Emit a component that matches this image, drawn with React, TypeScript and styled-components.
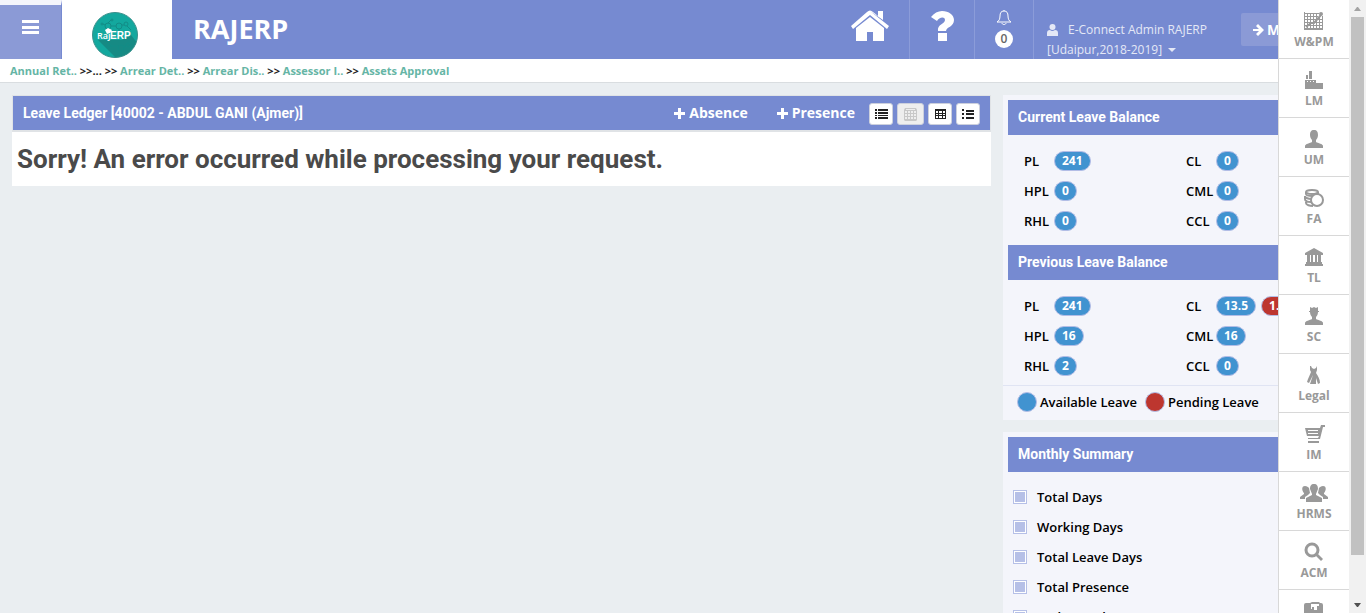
import React from "react";
import styled, { createGlobalStyle, css } from "styled-components";

const Global = createGlobalStyle`
  *, *::before { box-sizing: border-box; }
  html, body { margin: 0; height: 100%; overflow: hidden; }
  body { background: #eaeef1; font: 13px/20px "Open Sans", sans-serif; color: #000; }
  button { font: inherit; border: 0; padding: 0; cursor: pointer; }
  a { text-decoration: none; }
  h1, h2, p, ul, dl, dd { margin: 0; padding: 0; }
  svg { display: block; fill: currentColor; }
`;

const Window = styled.div`
  display: grid;
  grid-template-columns: minmax(0, 1fr) 17px;
  height: 100vh;
`;
const Page = styled.div`
  position: relative;
  overflow: hidden;
`;

/* Header */
const Header = styled.header`
  display: flex;
  height: 59px;
  background: #768ad1;
  color: #fff;
`;
const MenuButton = styled.button`
  width: 62px;
  padding: 0 0 11px;
  display: flex;
  align-items: center;
  justify-content: center;
  background: #8b9ad6;
  color: #fff;
  border-top: 5px solid #f4f5fb;
  border-right: 1px solid #768ad1;
`;
const LogoLink = styled.a`
  width: 110px;
  padding: 12px 0 0 30px;
  background: #fff;
`;
const Brand = styled.h1`
  margin-left: 21px;
  font-size: 27px;
  line-height: 58px;
  font-weight: 700;
`;
const Actions = styled.nav`
  margin-left: auto;
  display: flex;
`;
const Action = styled.a<{ $w: number }>`
  width: ${(p) => p.$w}px;
  padding-top: 10px;
  display: flex;
  flex-direction: column;
  align-items: center;
  color: #fff;
  border-right: 1px solid #8b9cd9;
`;
const Count = styled.span`
  width: 18px;
  height: 18px;
  margin-top: 4px;
  border-radius: 9px;
  background: #fff;
  color: #666;
  font-size: 12px;
  line-height: 18px;
  font-weight: 600;
  text-align: center;
`;
const User = styled.button`
  width: 207px;
  padding: 20px 0 0 13px;
  background: none;
  color: #e4e8f6;
  text-align: left;
  display: flex;
  flex-direction: column;
  font-size: 12px;
`;
const UserLine = styled.span<{ $gap: number }>`
  display: flex;
  align-items: center;
  gap: ${(p) => p.$gap}px;
`;
const Caret = styled.i`
  border: 4px solid transparent;
  border-top-color: currentColor;
  border-bottom: 0;
`;
const ModuleButton = styled.button`
  width: 93px;
  height: 33px;
  margin: 13px 15px 0 0;
  padding-left: 12px;
  display: flex;
  align-items: center;
  gap: 3px;
  border-radius: 2px;
  background: #8b9ad6;
  color: #fff;
  font-size: 14px;
  font-weight: 700;
`;

/* Breadcrumb */
const Crumbs = styled.nav`
  height: 24px;
  padding-left: 10px;
  background: #fff;
  border-bottom: 1px solid #d9dde0;
  font-size: 11px;
  line-height: 24px;
  font-weight: 700;
  color: #222;
  white-space: pre;
  a { color: #65b5a5; }
`;

/* Content */
const Content = styled.main`
  display: grid;
  grid-template-columns: minmax(0, 1fr) 334px;
  gap: 12px;
  padding: 12px;
  align-items: start;
`;
const Ledger = styled.section`
  background: #fff;
`;
const LedgerHead = styled.div`
  height: 37px;
  padding: 0 10px;
  display: flex;
  align-items: center;
  border: 1px solid #e0e3e6;
  border-bottom-width: 2px;
  background: #768ad1;
  color: #fff;
  font: 700 14px/34px Roboto, sans-serif;
`;
const Tools = styled.div`
  margin-left: auto;
  display: flex;
  align-items: center;
`;
const AddButton = styled.button`
  display: flex;
  align-items: center;
  gap: 4px;
  margin-right: 29px;
  background: none;
  color: #fff;
  font: 700 14px/20px "Open Sans", sans-serif;
  & + & { margin-right: 14px; }
`;
const Views = styled.div`
  display: flex;
  gap: 4px;
  padding-top: 2px;
`;
const ViewButton = styled.button`
  width: 24px;
  height: 22px;
  display: flex;
  align-items: center;
  justify-content: center;
  border: 1px solid #ccd0dd;
  border-radius: 3px;
  background: #fff;
  color: #222;
  &:disabled { width: 27px; background: #eee; color: #c8c8c8; cursor: default; }
`;
const ErrorText = styled.h2`
  padding: 0 5px;
  font: 700 26px/54px Roboto, sans-serif;
  color: #4a4a4a;
`;

const Side = styled.aside`
  display: grid;
  gap: 12px;
`;
const Panel = styled.section`
  padding: 5px 0 0;
  background: #f4f5fb;
`;
const PanelHead = styled.h2`
  margin: 0 5px;
  padding-left: 10px;
  background: #768ad1;
  color: #fff;
  font: 700 14px/35px Roboto, sans-serif;
`;
const Balances = styled.dl<{ $last?: boolean }>`
  display: grid;
  grid-template-columns: 162px 1fr;
  padding: 11px 0 ${(p) => (p.$last ? 4 : 9)}px 21px;
`;
const Balance = styled.div`
  height: 30px;
  display: flex;
  align-items: center;
  gap: 5px;
  font-weight: 600;
  dt { width: 25px; }
  dd { display: flex; gap: 5px; }
`;
const pill = css<{ $pending?: boolean }>`
  border: 1px solid #b3bde6;
  border-radius: 10px;
  background: ${(p) => (p.$pending ? "#bd362f" : "#4193d0")};
`;
const Pill = styled.span<{ $pending?: boolean }>`
  ${pill}
  height: 20px;
  padding: 0 7px;
  color: #fff;
  font-size: 12px;
  line-height: 18px;
  font-weight: 700;
`;
const Legend = styled.p`
  height: 35px;
  padding: 0 0 3px 14px;
  display: flex;
  align-items: center;
  gap: 8px;
  border-top: 1px solid #e0e4f3;
  font-weight: 600;
`;
const LegendItem = styled.span`
  display: flex;
  align-items: center;
  gap: 3px;
`;
const Dot = styled.i<{ $pending?: boolean }>`
  ${pill}
  width: 20px;
  height: 20px;
`;
const Summary = styled.ul`
  padding: 10px 0 10px 10px;
  list-style: none;
  font-weight: 600;
`;
const SummaryItem = styled.li`
  height: 30px;
  display: flex;
  align-items: center;
  gap: 10px;
  &::before {
    content: "";
    width: 14px;
    height: 14px;
    border: 1px solid #b6c0e7;
    background: #b6c0e7;
    box-shadow: inset 0 0 0 1px #fff;
  }
`;

/* Module rail floats over the right edge of the page */
const Rail = styled.nav`
  position: absolute;
  top: 0;
  right: 0;
  width: 71px;
  height: 100%;
  overflow: hidden;
  background: #fff;
  border-left: 1px solid #d8d8d8;
`;
const RailLink = styled.a`
  height: 59px;
  padding-top: 11px;
  display: flex;
  flex-direction: column;
  align-items: center;
  gap: 2px;
  border-bottom: 1px solid #d8d8d8;
  color: #999;
  font-size: 12px;
  line-height: 18px;
  font-weight: 700;
`;

/* Scroll bar */
const ScrollBar = styled.div`
  display: flex;
  flex-direction: column;
  padding: 0 2px;
  background: #f1f1f1;
`;
const Arrow = styled.i<{ $down?: boolean }>`
  height: 17px;
  flex: none;
  display: flex;
  align-items: center;
  justify-content: center;
  color: ${(p) => (p.$down ? "#505050" : "#a3a3a3")};
  svg { transform: rotate(${(p) => (p.$down ? 180 : 0)}deg); }
`;
const Track = styled.div`
  flex: 1;
`;
const Thumb = styled.div`
  height: 93%;
  background: #c1c1c1;
`;

const Plus = () => (
  <svg width="11" height="11" viewBox="0 0 11 11"><path d="M4 0h3v4h4v3H7v4H4V7H0V4h4z" /></svg>
);

const Logo = () => (
  <svg width="46" height="46" viewBox="0 0 46 46" role="img" aria-label="RajERP">
    <defs><clipPath id="disc"><circle cx="23" cy="23" r="22.5" /></clipPath></defs>
    <circle cx="23" cy="23" r="22.5" fill="#13a89e" />
    <g clipPath="url(#disc)">
      <path d="M6 28 24 46 46 46V32L39 23 30 28z" fill="#168a84" />
      <g fill="none" stroke="#128c86">
        <circle cx="16" cy="14" r="3" /><circle cx="27" cy="14" r="3" /><circle cx="20" cy="8" r="1" />
        <circle cx="34" cy="12" r="2" /><circle cx="10" cy="12" r="1" /><circle cx="17" cy="34" r="2" />
        <circle cx="29" cy="36" r="3" /><circle cx="36" cy="33" r="2" />
        <path d="M19 14h5M16 11l3-3M30 13h2M11 12l2 1M16 17v4M27 17v3M19 34h7M32 35l2-1M29 39v4M35 14l4 4" />
      </g>
    </g>
    <circle cx="23" cy="23" r="22.5" fill="none" stroke="#3a8f8b" />
    <path d="m13 18 3-2 2 1 2 1-2 3-3 1z" fill="#fff" />
    <text x="5" y="27" fill="#fff" fontFamily="Open Sans, sans-serif" fontSize="9" fontWeight="600">Raj</text>
    <text x="18" y="27" fill="#fff" fontFamily="Liberation Sans, sans-serif" fontSize="10" fontWeight="700">ERP</text>
  </svg>
);

const icons: Record<string, React.ReactNode> = {
  "W&PM": <><path d="M0 0h1v18H0zM3 1h1v17H3zM6 1h1v17H6zM9 1h1v17H9zM12 1h1v17h-1zM15 4h1v14h-1zM18 4h1v14h-1zM0 1h15v1H0zM0 4h14v1H0zM0 7h19v1H0zM0 10h19v1H0zM0 13h19v1H0zM0 16h19v2H0z" /><path d="m2 15 5-4 3 0 7-8" fill="none" stroke="currentColor" strokeWidth="2" /><circle cx="17" cy="2" r="2" /></>,
  LM: <path d="M5 0h3v8H5zM2 4h2v4H2zM1 9h11v3h7v6H1zM3 10v1h1v-1zM6 10v1h1v-1zM9 10v1h1v-1z" fillRule="evenodd" />,
  UM: <path d="M10 0c3 0 4 2 4 5 0 2-1 4-2 5v2c2 1 7 2 7 4v2H1v-2c0-2 5-3 7-4v-2C7 9 6 7 6 5c0-3 1-5 4-5z" />,
  FA: <g fill="none" stroke="currentColor" strokeWidth="2"><ellipse cx="8" cy="3" rx="6" ry="2" /><path d="M2 3v2c0 2 5 2 7 2M14 3v2M1 7c0 2 4 3 6 3M1 7v3c0 2 3 3 6 3M2 11v3c0 2 4 3 7 3" /><circle cx="13" cy="11" r="6" /></g>,
  TL: <path d="m10 0 9 5v2H1V5zM3 7h3v7H3zM7 7h2v7H7zM11 7h2v7h-2zM14 7h3v7h-3zM2 14h16v2H2zM1 16h18v2H1z" />,
  SC: <path d="m6 0 2 1 2-1 2 1 2-1v4h1v1h-1c0 2-1 4-2 5v2c2 1 7 2 7 4v2H1v-2c0-2 5-3 7-4v-2C7 9 6 7 6 5H5V4h1z" />,
  Legal: <path d="M6 0h1l1 2 2 1 2-1 1-2v4l-1 3c2 3 4 6 4 10l-2 1-2-6v6H6l3-9-4 8-2-1c1-4 3-7 4-10L6 4z" />,
  IM: <path d="M17 0h4v2h-2l-3 12H4v-1h10l1-2H3L1 3h15zM4 5v1h10V5zM4 8v1h10V8zM4 16h11v2H4z" fillRule="evenodd" />,
  HRMS: <path d="M10 0c3 0 4 2 4 5l-2 5v1l6 3v4H2v-4l6-3v-1L6 5c0-3 1-5 4-5zM1 2c2 0 3 1 4 2l1 5-2 2-3 2v2h-5v-2l4-3v-1c-2-2-3-7 1-7zM19 2c-2 0-3 1-4 2l-1 5 2 2 3 2v2h5v-2l-4-3v-1c2-2 3-7-1-7z" />,
  ACM: <><circle cx="8" cy="7" r="6" fill="none" stroke="currentColor" strokeWidth="3" /><path d="m11 12 2-2 6 6-2 2z" /></>,
  Files: <path d="M0 3q0-2 2-2h4l2-1h7l1 1h1q2 0 2 2v15H0zM7 2v5h1V5h2v3h3V4h2V2z" fillRule="evenodd" />,
};

const RailIcon = ({ name }: { name: string }) => (
  <svg width="20" height="20" viewBox="0 -1 20 20" overflow="visible" aria-hidden="true">{icons[name]}</svg>
);

const crumbs = ["Arrear Det..", "Arrear Dis..", "Assessor I..", "Assets Approval"];
type Leave = [string, string, string?];
const current: Leave[] = [["PL", "241"], ["CL", "0"], ["HPL", "0"], ["CML", "0"], ["RHL", "0"], ["CCL", "0"]];
const previous: Leave[] = [["PL", "241"], ["CL", "13.5", "1.5"], ["HPL", "16"], ["CML", "16"], ["RHL", "2"], ["CCL", "0"]];
const summary = ["Total Days", "Working Days", "Total Leave Days", "Total Presence", "Early Punch"];

const BalanceList = ({ items, last }: { items: Leave[]; last?: boolean }) => (
  <Balances $last={last}>
    {items.map(([name, left, pending]) => (
      <Balance key={name}>
        <dt>{name}</dt>
        <dd><Pill>{left}</Pill>{pending && <Pill $pending>{pending}</Pill>}</dd>
      </Balance>
    ))}
  </Balances>
);

export default function App() {
  return (
    <>
      <Global />
      <Window>
        <Page>
          <Header>
            <MenuButton aria-label="Menu">
              <svg width="17" height="14" viewBox="0 0 17 14"><path d="M0 0h17v3H0zM0 6h17v3H0zM0 11h17v3H0z" /></svg>
            </MenuButton>
            <LogoLink href="#"><Logo /></LogoLink>
            <Brand>RAJERP</Brand>
            <Actions>
              <Action href="#" $w={79} aria-label="Home">
                <svg width="38" height="32" viewBox="0 0 38 32"><path d="M19 1 38 16l-2 3L19 5 2 19l-2-3L16 2q3-3 6 0l5 4V1h5v9z" /><path d="m19 7 14 11v13h-11v-9h-6v9H5V18z" /></svg>
              </Action>
              <Action href="#" $w={65} aria-label="Help">
                <svg width="23" height="32" viewBox="0 0 23 32"><path d="M0 7C3 3 7 1 11 1c7 0 12 4 12 9 0 7-8 7-8 11H7c-1-7 7-7 7-11 0-4-6-3-8 1zM7 23h9v8H7z" /></svg>
              </Action>
              <Action href="#" $w={59} aria-label="Notifications">
                <svg width="16" height="16" viewBox="0 0 16 16"><path d="M8 0v1C5 1 4 3 4 6c0 3-1 5-3 6h14c-2-1-3-3-3-6 0-3-1-5-4-5M6 13c0 2 4 2 4 0" fill="none" stroke="currentColor" /></svg>
                <Count>0</Count>
              </Action>
              <User>
                <UserLine $gap={10}>
                  <svg width="11" height="12" viewBox="0 0 11 12"><circle cx="5.5" cy="3" r="3" /><path d="M0 12V9q0-3 3-3 2 2 5 0 3 0 3 3v3z" /></svg>
                  E-Connect Admin RAJERP
                </UserLine>
                <UserLine $gap={6}>[Udaipur,2018-2019]<Caret /></UserLine>
              </User>
              <ModuleButton>
                <svg width="11" height="12" viewBox="0 0 11 12"><path d="m5 0 6 6-6 6-2-2 3-3H0V5h6L3 2z" /></svg>
                Modules
              </ModuleButton>
            </Actions>
          </Header>
          <Crumbs aria-label="Breadcrumb">
            <a href="#">Annual Ret..</a>{" >>..."}
            {crumbs.map((c) => <React.Fragment key={c}>{" >> "}<a href="#">{c}</a></React.Fragment>)}
          </Crumbs>
          <Content>
            <Ledger>
              <LedgerHead>
                Leave Ledger [40002 - ABDUL GANI (Ajmer)]
                <Tools>
                  <AddButton><Plus />Absence</AddButton>
                  <AddButton><Plus />Presence</AddButton>
                  <Views>
                    <ViewButton aria-label="List">
                      <svg width="13" height="10" viewBox="0 0 13 10"><path d="M0 0h2v2H0zM3 0h10v2H3zM0 3h2v2H0zM3 3h10v2H3zM0 6h2v1H0zM3 6h10v1H3zM0 8h2v2H0zM3 8h10v2H3z" /></svg>
                    </ViewButton>
                    <ViewButton disabled aria-label="Calendar">
                      <svg width="13" height="13" viewBox="0 0 13 13"><path d="M1 0h11l1 2v10l-1 1H1l-1-1V2zM1 3v2h2V3zM4 3v2h2V3zM7 3v2h2V3zM10 3v2h2V3zM1 6v2h2V6zM4 6v2h2V6zM7 6v2h2V6zM10 6v2h2V6zM1 9v2h2V9zM4 9v2h2V9zM7 9v2h2V9zM10 9v2h2V9zM2 1h9v1H2z" fillRule="evenodd" /></svg>
                    </ViewButton>
                    <ViewButton aria-label="Table">
                      <svg width="11" height="10" viewBox="0 0 11 10"><path d="M0 0h11v10H0zM1 2v2h2V2zM4 2v2h3V2zM8 2v2h2V2zM1 5v1h2V5zM4 5v1h3V5zM8 5v1h2V5zM1 7v2h2V7zM4 7v2h3V7zM8 7v2h2V7z" fillRule="evenodd" /></svg>
                    </ViewButton>
                    <ViewButton aria-label="Details">
                      <svg width="12" height="10" viewBox="0 0 12 10"><path d="M0 0h2v2H0zM4 1h8v2H4zM0 4h2v2H0zM4 4h8v2H4zM0 8h2v2H0zM4 8h8v2H4z" /></svg>
                    </ViewButton>
                  </Views>
                </Tools>
              </LedgerHead>
              <ErrorText>Sorry! An error occurred while processing your request.</ErrorText>
            </Ledger>
            <Side>
              <Panel>
                <PanelHead>Current Leave Balance</PanelHead>
                <BalanceList items={current} />
                <PanelHead>Previous Leave Balance</PanelHead>
                <BalanceList items={previous} last />
                <Legend>
                  <LegendItem><Dot />Available Leave</LegendItem>
                  <LegendItem><Dot $pending />Pending Leave</LegendItem>
                </Legend>
              </Panel>
              <Panel>
                <PanelHead>Monthly Summary</PanelHead>
                <Summary>{summary.map((s) => <SummaryItem key={s}>{s}</SummaryItem>)}</Summary>
              </Panel>
            </Side>
          </Content>
          <Rail aria-label="Modules">
            {Object.keys(icons).map((name) => (
              <RailLink href="#" key={name}><RailIcon name={name} />{name}</RailLink>
            ))}
          </Rail>
        </Page>
        <ScrollBar aria-hidden="true">
          <Arrow><svg width="7" height="4" viewBox="0 0 7 4"><path d="M0 4 3 0h1l3 4z" /></svg></Arrow>
          <Track><Thumb /></Track>
          <Arrow $down><svg width="7" height="4" viewBox="0 0 7 4"><path d="M0 4 3 0h1l3 4z" /></svg></Arrow>
        </ScrollBar>
      </Window>
    </>
  );
}
